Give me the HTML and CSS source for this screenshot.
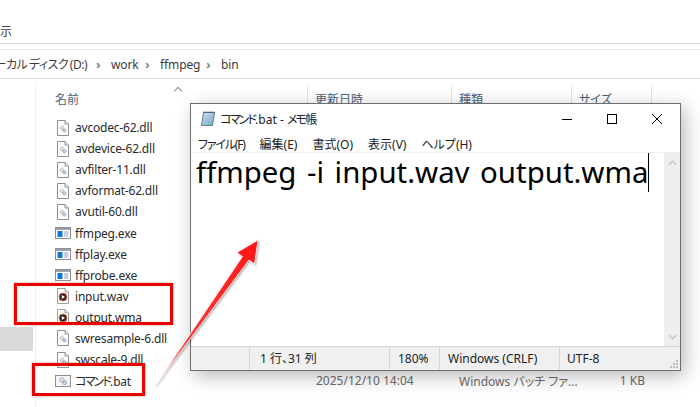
FILE: index.html
```html
<!DOCTYPE html>
<html lang="ja">
<head>
<meta charset="utf-8">
<title>コマンド.bat - メモ帳</title>
<link rel="stylesheet" href="styles.css">
</head>
<body>
<svg width="0" height="0" class="defs">
  <defs>
    <symbol id="gear" viewBox="0 0 16 16">
      <circle cx="6.5" cy="6.500" r="3" fill="#dfe6ee" stroke="#7f8b99" stroke-width="1.2" stroke-dasharray="1.6 .8"/>
      <circle cx="10.300" cy="10.300" r="2.600" fill="#c9d6e4" stroke="#76828f" stroke-width="1.2" stroke-dasharray="1.6 .8"/>
    </symbol>
    <symbol id="dll" viewBox="0 0 12 16">
      <path d="M.5.5h7.600l3.400 3.400v11.600H.5z" fill="#fff" stroke="#8f8f8f"/>
      <path d="M8 .5v3.500h3.500" fill="#eee" stroke="#8f8f8f"/>
      <use href="#gear" x="1" y="4" width="10" height="10"/>
    </symbol>
    <symbol id="exe" viewBox="0 0 16 12">
      <rect x=".5" y=".5" width="15" height="11" fill="#fff" stroke="#8a8f96"/>
      <rect x="1" y="1" width="14" height="2" fill="#9aa2ac"/>
      <rect x="2.500" y="4" width="5" height="6" fill="#0a78d7"/>
      <path d="M9 5h4.500M9 7h4.500M9 9h4.500" stroke="#9aa2ac"/>
    </symbol>
    <symbol id="bat" viewBox="0 0 16 12">
      <rect x=".5" y=".5" width="15" height="11" fill="#f4f4f4" stroke="#8a8f96"/>
      <use href="#gear" x="2" y="0" width="12" height="12"/>
    </symbol>
    <symbol id="media" viewBox="0 0 12 16">
      <path d="M.5.5h7.600l3.400 3.400v11.600H.5z" fill="#fff" stroke="#a0a0a0"/>
      <path d="M8 .5v3.500h3.500" fill="#eee" stroke="#a0a0a0"/>
      <circle cx="6" cy="9" r="4" fill="#2b2233" stroke="#d9703c"/>
      <path d="M4.800 7l3.200 2-3.200 2z" fill="#fff"/>
    </symbol>
  </defs>
</svg>
<div class="stage">
  <div class="explorer">
    <div class="ribbon"><span class="ribbon-tab">表示</span></div>
    <nav class="crumbs">
      <span class="crumb-first">ローカル ディスク (D:)</span>
      <span class="chev">›</span><span class="crumb-work">work</span>
      <span class="chev">›</span><span class="crumb-ff">ffmpeg</span>
      <span class="chev">›</span><span>bin</span>
    </nav>
    <div class="content">
      <aside class="nav-pane"><div class="nav-selected"></div></aside>
      <div class="files">
        <div class="head">
          <span class="hcell hname">名前<i class="sort"></i></span>
          <span class="hcell">更新日時</span>
          <span class="hcell">種類</span>
          <span class="hcell">サイズ</span>
        </div>
        <ul class="rows">
          <li class="row"><svg class="ico-page"><use href="#dll"/></svg><span>avcodec-62.dll</span></li>
          <li class="row"><svg class="ico-page"><use href="#dll"/></svg><span>avdevice-62.dll</span></li>
          <li class="row"><svg class="ico-page"><use href="#dll"/></svg><span>avfilter-11.dll</span></li>
          <li class="row"><svg class="ico-page"><use href="#dll"/></svg><span>avformat-62.dll</span></li>
          <li class="row"><svg class="ico-page"><use href="#dll"/></svg><span>avutil-60.dll</span></li>
          <li class="row"><svg class="ico-wide"><use href="#exe"/></svg><span>ffmpeg.exe</span></li>
          <li class="row"><svg class="ico-wide"><use href="#exe"/></svg><span>ffplay.exe</span></li>
          <li class="row"><svg class="ico-wide"><use href="#exe"/></svg><span>ffprobe.exe</span></li>
          <li class="row"><svg class="ico-page"><use href="#media"/></svg><span>input.wav</span></li>
          <li class="row"><svg class="ico-page"><use href="#media"/></svg><span>output.wma</span></li>
          <li class="row"><svg class="ico-page"><use href="#dll"/></svg><span>swresample-6.dll</span></li>
          <li class="row"><svg class="ico-page"><use href="#dll"/></svg><span>swscale-9.dll</span></li>
          <li class="row last">
            <svg class="ico-wide"><use href="#bat"/></svg><span class="fname"><span class="tight">コマンド</span>.bat</span>
            <span class="meta date">2025/12/10 14:04</span>
            <span class="meta type">Windows バッチ ファ...</span>
            <span class="meta size">1 KB</span>
          </li>
        </ul>
      </div>
    </div>
  </div>

  <section class="notepad">
    <header class="titlebar">
      <svg class="np-icon" viewBox="0 0 16 16">
        <defs><linearGradient id="npg" x1="0" y1="0" x2="1" y2="1"><stop offset="0" stop-color="#d5e6f0"/><stop offset="1" stop-color="#6fa6bd"/></linearGradient></defs>
        <path d="M3.500 1.500h11l-2 13h-11z" fill="url(#npg)" stroke="#5b7f92"/>
        <path d="M3.500 1.200h11" stroke="#3c4a55" stroke-dasharray="1 1" stroke-width="1.400"/>
        <path d="M4 5h8M3.600 7.500h8M3.200 10h8" stroke="#9cc0d2" stroke-width=".7"/>
      </svg>
      <span class="np-title"><span class="tight">コマンド</span>.bat - <span class="tight">メモ帳</span></span>
      <div class="controls">
        <svg viewBox="0 0 10 10"><path d="M0 5.500h10" stroke="#000"/></svg>
        <svg viewBox="0 0 10 10"><rect x=".5" y=".5" width="9" height="9" fill="none" stroke="#000"/></svg>
        <svg viewBox="0 0 10 10"><path d="M0 0l10 10M10 0L0 10" stroke="#000"/></svg>
      </div>
    </header>
    <div class="menubar">
      <span class="menu-file">ファイル(F)</span><span>編集(E)</span><span>書式(O)</span><span>表示(V)</span><span>ヘルプ(H)</span>
    </div>
    <div class="editor">
      <div class="text-area"><span class="doc">ffmpeg -i input.wav output.wma</span><i class="caret"></i></div>
      <div class="scrollbar">
        <svg viewBox="0 0 10 6"><path d="M1 5l4-4 4 4" fill="none" stroke="#c4c4c4" stroke-width="1.600"/></svg>
        <svg viewBox="0 0 10 6"><path d="M1 1l4 4 4-4" fill="none" stroke="#c4c4c4" stroke-width="1.600"/></svg>
      </div>
    </div>
    <footer class="status">
      <span class="cell blank"></span>
      <span class="cell pos">1 行、31 列</span>
      <span class="cell zoom">180%</span>
      <span class="cell eol">Windows (CRLF)</span>
      <span class="cell enc">UTF-8</span>
      <svg class="grip" viewBox="0 0 9 9"><path d="M7 1h2v2H7zM4 4h2v2H4zM7 4h2v2H7zM1 7h2v2H1zM4 7h2v2H4zM7 7h2v2H7z" fill="#bdbdbd"/></svg>
    </footer>
  </section>

  <div class="mark mark-media"></div>
  <div class="mark mark-bat"></div>
  <svg class="arrow" viewBox="0 0 700 407">
    <defs>
      <linearGradient id="arr" gradientUnits="userSpaceOnUse" x1="155" y1="386" x2="258" y2="240">
        <stop offset="0" stop-color="#ffc0c0"/>
        <stop offset=".2" stop-color="#ff4040"/>
        <stop offset="1" stop-color="#ff1414"/>
      </linearGradient>
    </defs>
    <path class="arrow-shape" d="M155 386L242.500 256.500 237 252.500 258 240 254.500 264 249 260z"/>
  </svg>
</div>
</body>
</html>
```
FILE: styles.css
```css
* { box-sizing: border-box; }
html, body { margin: 0; padding: 0; background: #fff; }
body { font-family: "Noto Sans", "Noto Sans CJK JP", sans-serif; font-size: 12px; color: #333; font-feature-settings: "palt"; }
.defs { position: absolute; }
.stage { position: relative; width: 700px; height: 407px; overflow: hidden; background: #fff; }
.tight { letter-spacing: -1.8px; }

.explorer { display: flex; flex-direction: column; height: 100%; }
.ribbon { height: 44px; border-bottom: 1px solid #dcdcdc; display: flex; align-items: flex-end; padding-bottom: 2px; margin-bottom: 5px; }
.ribbon-tab { margin-left: -12px; line-height: 18px; color: #444; }
.crumbs { height: 30px; border-top: 1px solid #e2e2e2; border-bottom: 1px solid #dcdcdc; display: flex; align-items: center; color: #3c3c3c; white-space: nowrap; letter-spacing: -.1px; }
.crumb-first { margin-left: -30px; width: 126px; padding-right: 9px; flex: none; text-align: right; letter-spacing: -.5px; word-spacing: -1px; }
.chev { width: 15px; flex: none; color: #888; font-weight: 700; font-size: 13px; }
.crumb-work { width: 34px; flex: none; }
.crumb-ff { width: 46px; flex: none; }

.content { flex: 1; display: flex; min-height: 0; padding-top: 7px; }
.nav-pane { width: 36px; flex: none; border-right: 1px solid #eee; position: relative; }
.nav-selected { width: 33px; height: 24px; margin-top: 241px; background: #d9d9d9; }
.files { flex: 1; min-width: 0; }

.head { display: grid; grid-template-columns: 272px 144px 120px 80px; height: 28px; }
.hcell { border-right: 1px solid #e5e5e5; padding-left: 7px; color: #4c607a; line-height: 27px; position: relative; font-size: 12px; height: 28px; }
.hname { padding-left: 19px; }
.sort { position: absolute; left: 139px; top: 0; width: 6px; height: 6px; border-left: 1px solid #888; border-top: 1px solid #888; transform: rotate(45deg); margin-top: 2px; }

.rows { list-style: none; margin: 3px 0 0; padding: 0; }
.row { height: 21.1px; display: grid; grid-template-columns: 39px 241px 144px 120px 65px; align-items: center; color: #2b2b2b; white-space: nowrap; letter-spacing: -.2px; }
.ico-page { width: 12px; height: 16px; margin-left: 21px; }
.ico-wide { width: 16px; height: 12px; margin-left: 19px; }
.meta { color: #6d6d6d; letter-spacing: 0; }
.type { margin-left: -1px; }
.size { text-align: right; }

.notepad { position: absolute; left: 190px; top: 103px; width: 491px; height: 268px; background: #fff; border: 1px solid #6e6e6e; box-shadow: 4px 5px 18px rgba(0,0,0,.28); display: flex; flex-direction: column; }
.titlebar { height: 30px; flex: none; display: flex; align-items: center; padding-left: 9px; }
.np-icon { width: 16px; height: 16px; flex: none; }
.np-title { margin-left: 4px; color: #222; font-size: 12px; }
.controls { margin-left: auto; display: flex; gap: 35px; padding-right: 18px; }
.controls svg { width: 10px; height: 10px; display: block; }
.menubar { height: 19px; flex: none; display: flex; gap: 15px; padding: 1px 0 0 7px; align-items: center; font-size: 12px; color: #222; border-bottom: 1px solid #f0f0f0; }
.menu-file { letter-spacing: -1.2px; }
.editor { flex: 1; min-height: 0; display: flex; }
.text-area { flex: 1; display: flex; align-items: flex-start; padding: 0 0 0 5px; }
.doc { font-size: 29.4px; line-height: 39px; color: #000; white-space: pre; word-spacing: 2.9px; }
.caret { width: 1px; height: 39px; background: #000; }
.scrollbar { width: 16px; flex: none; background: #eee; display: flex; flex-direction: column; justify-content: space-between; align-items: center; padding: 7px 0 6px; }
.scrollbar svg { width: 9px; height: 6px; }
.status { height: 24px; flex: none; background: #f0f0f0; border-top: 1px solid #d7d7d7; display: grid; grid-template-columns: 58px 140px 50px 120px 1fr; align-items: stretch; position: relative; color: #222; }
.cell { line-height: 23px; padding-left: 8px; border-left: 1px solid #d7d7d7; white-space: nowrap; }
.blank { border-left: 0; }
.pos { padding-left: 10px; }
.enc { padding-left: 7px; }
.grip { position: absolute; right: 2px; bottom: 2px; width: 9px; height: 9px; }

.mark { position: absolute; border: 3px solid #e60000; box-shadow: 0 0 2px rgba(120,0,0,.45); }
.mark-media { left: 14px; top: 283px; width: 159px; height: 42px; }
.mark-bat { left: 32px; top: 363px; width: 113px; height: 33px; }
.arrow { position: absolute; left: 0; top: 0; width: 700px; height: 407px; pointer-events: none; }
.arrow-shape { fill: url(#arr); stroke: #fff; stroke-width: .8; filter: drop-shadow(1px 1px 1.2px rgba(0,0,0,.35)); }
```
